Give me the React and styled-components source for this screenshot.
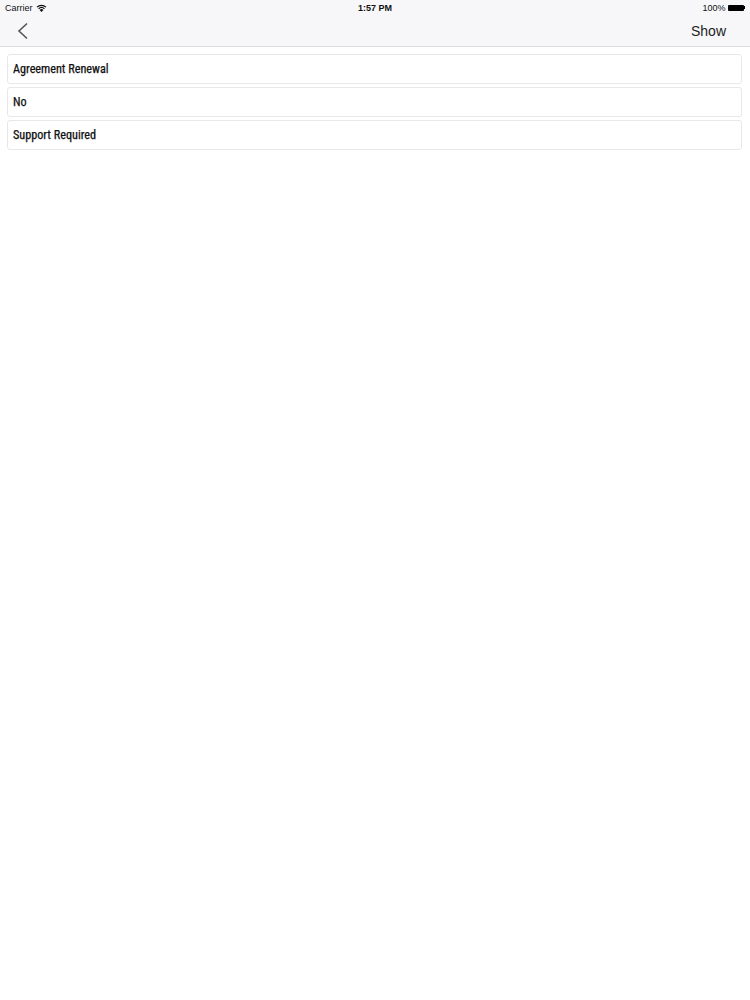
import React from 'react';
import styled, { createGlobalStyle } from 'styled-components';

const GlobalStyle = createGlobalStyle`
  html, body {
    margin: 0;
    padding: 0;
    background: #ffffff;
  }
  body {
    font-family: "Roboto", "Liberation Sans", sans-serif;
  }
`;

const Page = styled.div`
  width: 750px;
  min-height: 1000px;
  background: #ffffff;
`;

const Header = styled.div`
  background: #f7f7f9;
  border-bottom: 1px solid #dcdcde;
`;

const StatusBar = styled.div`
  height: 15px;
  display: grid;
  grid-template-columns: 1fr auto 1fr;
  align-items: center;
  padding: 0 5px;
  font-family: "Liberation Sans", "Roboto", sans-serif;
  font-size: 9px;
  color: #111;
`;

const StatusLeft = styled.div`
  display: flex;
  align-items: center;
  gap: 3px;
`;

const StatusCenter = styled.div`
  font-weight: 600;
`;

const StatusRight = styled.div`
  display: flex;
  align-items: center;
  justify-content: flex-end;
  gap: 2px;
`;

const Battery = styled.div`
  display: flex;
  align-items: center;
  &::before {
    content: '';
    display: block;
    width: 16px;
    height: 6px;
    background: #000;
    border-radius: 1px;
  }
  &::after {
    content: '';
    display: block;
    width: 1.5px;
    height: 3px;
    background: #000;
  }
`;

const NavBar = styled.div`
  height: 31px;
  display: flex;
  align-items: center;
  justify-content: space-between;
  padding: 0 24px 0 16px;
`;

const BackButton = styled.button`
  border: none;
  background: none;
  padding: 0;
  display: flex;
  align-items: center;
  cursor: pointer;
`;

const NavAction = styled.button`
  border: none;
  background: none;
  padding: 0;
  font-family: "Liberation Sans", "Roboto", sans-serif;
  font-size: 14px;
  color: #222;
  cursor: pointer;
`;

const List = styled.div`
  display: flex;
  flex-direction: column;
  gap: 3px;
  padding: 7px 8px 0 7px;
`;

const Row = styled.div`
  height: 28px;
  display: flex;
  align-items: center;
  padding: 0 5px;
  border: 1px solid #e8e8ea;
  border-radius: 3px;
  background: #fff;
  font-family: "Roboto Condensed", "Liberation Sans Narrow", "Roboto", sans-serif;
  font-weight: 400;
  font-size: 12.2px;
  color: #111;
  -webkit-text-stroke: 0.25px #111;
`;

const WifiIcon = () => (
  <svg width="11" height="8" viewBox="0 0 11 8">
    <path d="M5.5 8 L3.6 5.9 A2.8 2.8 0 0 1 7.4 5.9 Z" fill="#111" />
    <path d="M2.6 4.8 A4.3 4.3 0 0 1 8.4 4.8" stroke="#111" strokeWidth="1.2" fill="none" />
    <path d="M1 3.1 A6.5 6.5 0 0 1 10 3.1" stroke="#111" strokeWidth="1.2" fill="none" />
  </svg>
);

const items = ['Agreement Renewal', 'No', 'Support Required'];

export default function App() {
  return (
    <Page>
      <GlobalStyle />
      <Header>
        <StatusBar>
          <StatusLeft>
            Carrier
            <WifiIcon />
          </StatusLeft>
          <StatusCenter>1:57 PM</StatusCenter>
          <StatusRight>
            100%
            <Battery />
          </StatusRight>
        </StatusBar>
        <NavBar>
          <BackButton aria-label="Back">
            <svg width="14" height="18" viewBox="0 0 14 18">
              <path d="M11 1.5 L3 9 L11 16.5" stroke="#555" strokeWidth="1.6" fill="none" />
            </svg>
          </BackButton>
          <NavAction>Show</NavAction>
        </NavBar>
      </Header>
      <List>
        {items.map((label) => (
          <Row key={label}>{label}</Row>
        ))}
      </List>
    </Page>
  );
}
